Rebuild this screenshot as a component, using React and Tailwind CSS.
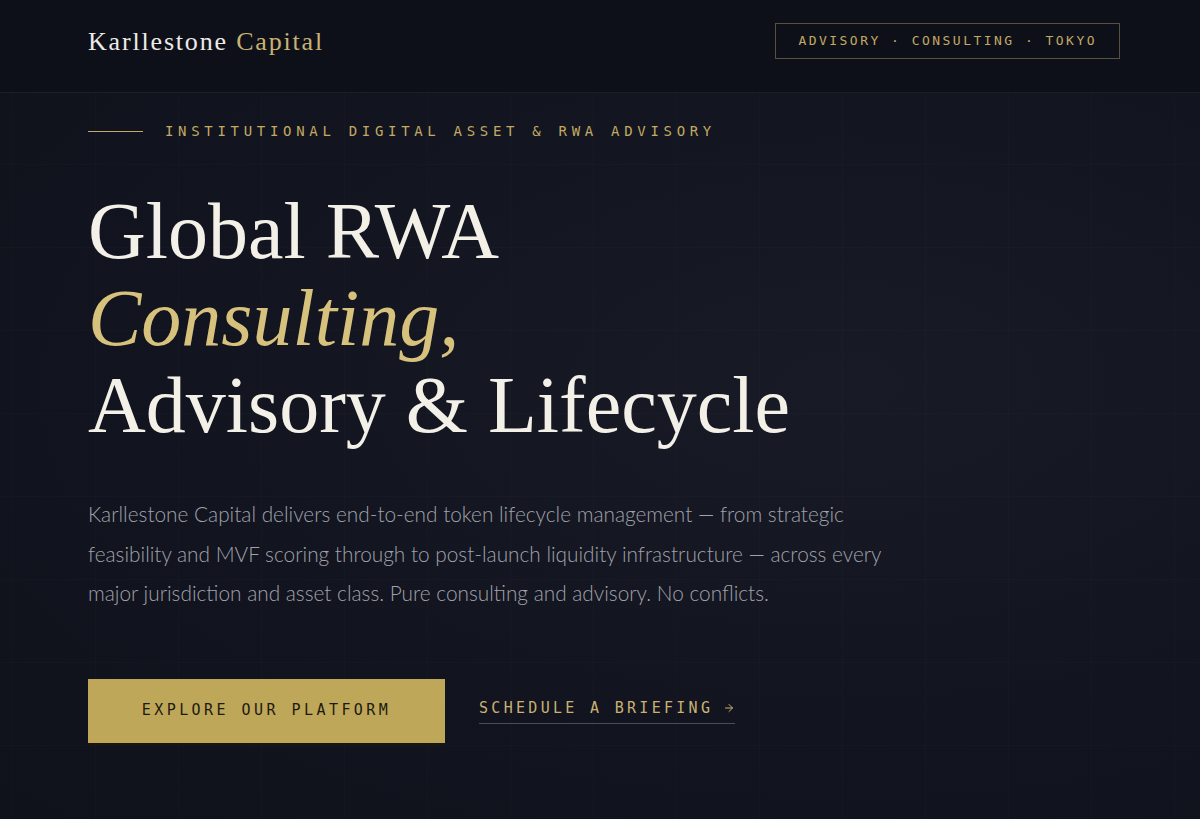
import { ArrowRight } from 'lucide-react';

const serif = "font-['Liberation_Serif',serif]";
const mono = "font-['DejaVu_Sans_Mono',monospace]";
const sans = "font-['Lato',sans-serif]";

function Header() {
  return (
    <header className="bg-[#0e1019] border-b border-white/[0.06]">
      <div className="flex items-center justify-between h-[92px] pb-[10px] px-[88px] pr-[80px]">
        <a href="#" className={`${serif} text-[26px] tracking-[0.07em] text-[#ecebe6]`}>
          Karllestone <span className="text-[#c9b272]">Capital</span>
        </a>
        <div
          className={`${mono} border border-[#c9b272]/40 h-[36px] px-[22px] flex items-center text-[13px] tracking-[0.19em] text-[#c2aa62]`}
        >
          ADVISORY · CONSULTING · TOKYO
        </div>
      </div>
    </header>
  );
}

function Hero() {
  return (
    <section className="relative flex-1 bg-[radial-gradient(ellipse_at_70%_40%,#181a26_0%,#12141f_55%,#0f111b_100%)]">
      <div className="absolute inset-0 bg-[linear-gradient(rgba(255,255,255,0.012)_1px,transparent_1px),linear-gradient(90deg,rgba(255,255,255,0.012)_1px,transparent_1px)] bg-[size:83px_83px] bg-[position:12px_-12px]" />
      <div className="relative px-[88px] pt-[28px]">
        <div className="flex items-center gap-[22px]">
          <span className="block w-[55px] h-px bg-[#c2aa62]" />
          <span className={`${mono} text-[14px] tracking-[0.335em] text-[#c2aa62]`}>
            INSTITUTIONAL DIGITAL ASSET &amp; RWA ADVISORY
          </span>
        </div>

        <h1 className={`${serif} mt-[46px] text-[80px] leading-[87px] font-normal text-[#f3f0e8]`}>
          Global RWA
          <br />
          <em className="text-[#d7c27d]">Consulting,</em>
          <br />
          Advisory &amp; Lifecycle
        </h1>

        <p className={`${sans} mt-[45px] max-w-[820px] text-[20.8px] leading-[39.5px] font-light text-[#a0a2ab]`}>
          Karllestone Capital delivers end-to-end token lifecycle management — from strategic
          feasibility and MVF scoring through to post-launch liquidity infrastructure — across every
          major jurisdiction and asset class. Pure consulting and advisory. No conflicts.
        </p>

        <div className="mt-[66px] flex items-center gap-[34px]">
          <a
            href="#"
            className={`${mono} flex items-center justify-center w-[357px] h-[64px] bg-[#bfa75a] text-[15px] tracking-[0.23em] text-[#1d1a10] shadow-[0_2px_0_#1a160c]`}
          >
            EXPLORE OUR PLATFORM
          </a>
          <a
            href="#"
            className={`${mono} flex items-center gap-[10px] pb-[4px] border-b border-[#4a4c57] text-[15px] tracking-[0.22em] text-[#c9b272]`}
          >
            SCHEDULE A BRIEFING
            <ArrowRight size={12} strokeWidth={2} />
          </a>
        </div>
      </div>
    </section>
  );
}

export default function App() {
  return (
    <div className="min-h-[819px] flex flex-col bg-[#0f111b]">
      <Header />
      <Hero />
    </div>
  );
}
